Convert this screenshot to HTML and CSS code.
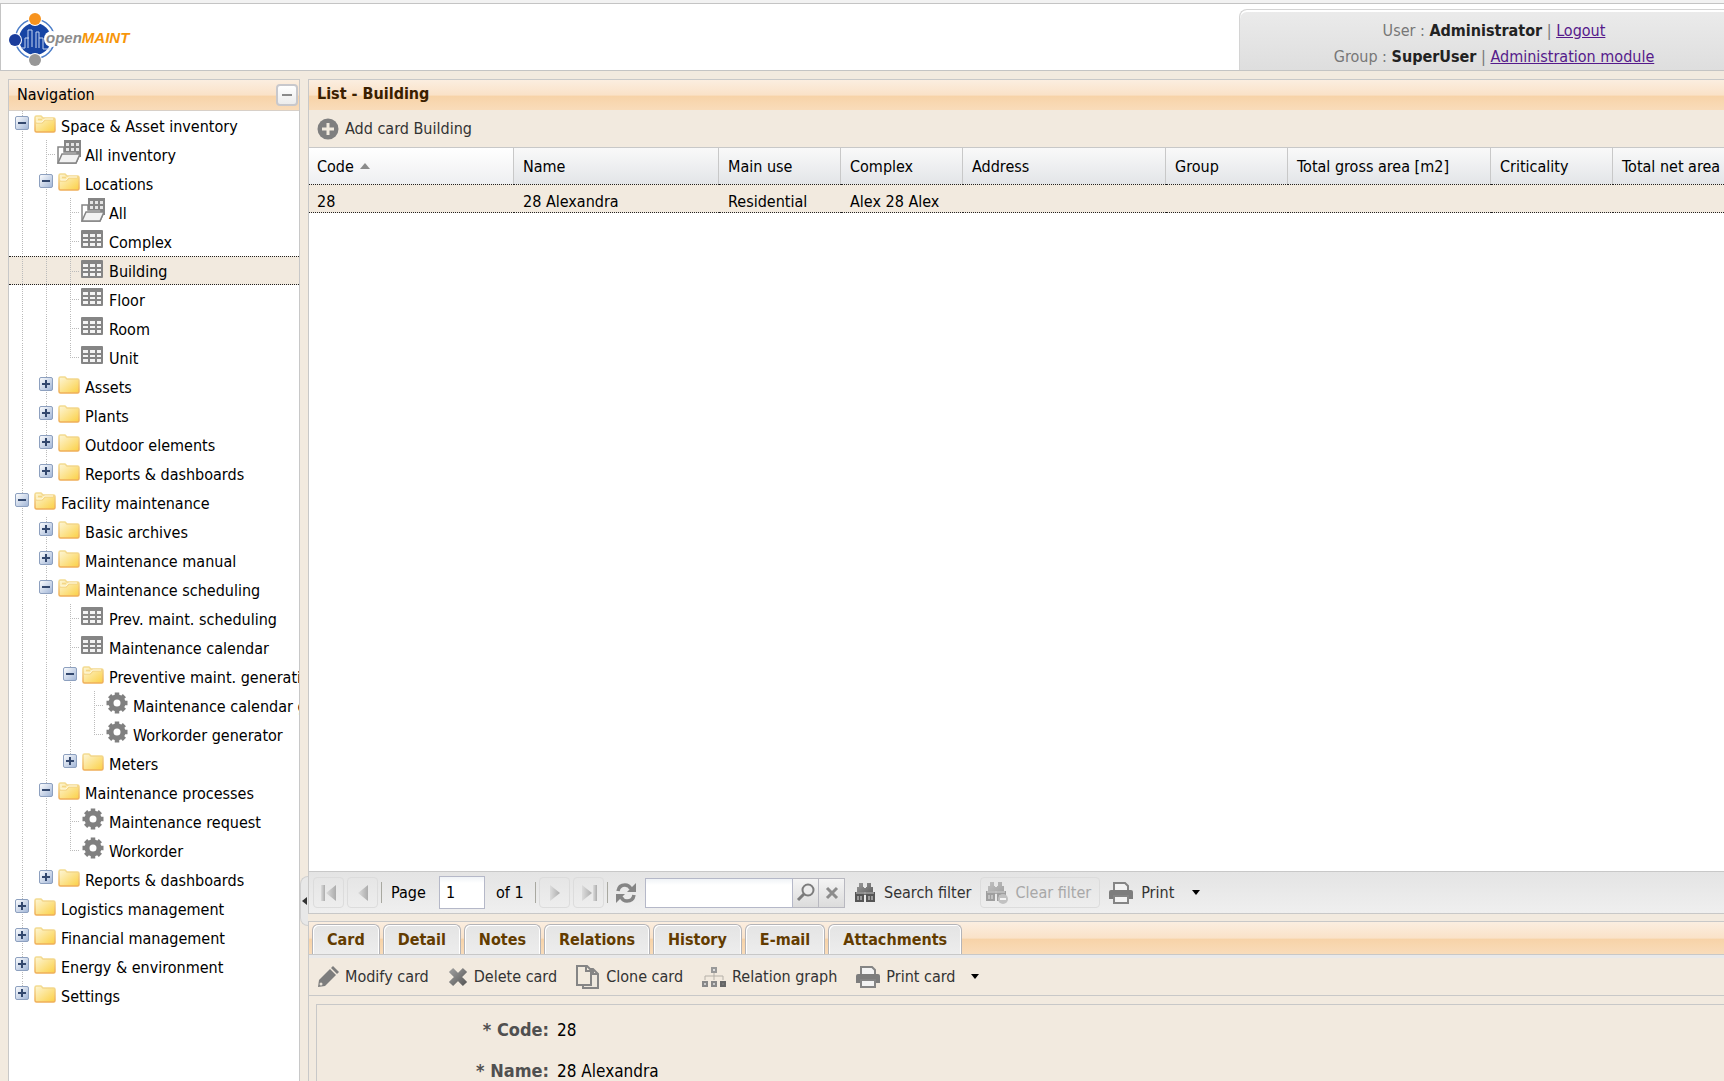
FILE: index.html
```html
<!DOCTYPE html>
<html lang="en">

<head>
    <meta charset="UTF-8">
    <meta name="viewport" content="width=device-width, initial-scale=1.0">
    <title>openMAINT</title>
    <link rel="stylesheet" href="styles.css">
</head>

<body>
    <!-- Icon set -->
    <svg class="icon-set" aria-hidden="true">
        <defs>
            <linearGradient id="gold" x1="0" y1="0" x2="1" y2="1">
                <stop offset="0" stop-color="#fdf6d8"/>
                <stop offset="1" stop-color="#fbd044"/>
            </linearGradient>
            <linearGradient id="goldEdge" x1="0" y1="0" x2="0" y2="1">
                <stop offset="0" stop-color="#f3dc92"/>
                <stop offset="1" stop-color="#efae58"/>
            </linearGradient>
            <linearGradient id="blueBox" x1="0" y1="0" x2="1" y2="1">
                <stop offset="0" stop-color="#ffffff"/>
                <stop offset="1" stop-color="#9fb4d6"/>
            </linearGradient>
            <linearGradient id="fade" x1="0" y1="0" x2="1" y2="0">
                <stop offset="0" stop-color="#dcdcdc"/>
                <stop offset="1" stop-color="#acacac"/>
            </linearGradient>
            <linearGradient id="dark" x1="0" y1="0" x2="1" y2="1">
                <stop offset="0" stop-color="#9a9a9a"/>
                <stop offset="1" stop-color="#5c5c5c"/>
            </linearGradient>
            <symbol id="folder" viewBox="0 0 22 18">
                <path d="M1 2.5Q1 1 2.5 1H7L9 3H19.5Q21 3 21 4.5V15.5Q21 17 19.5 17H2.5Q1 17 1 15.5Z" fill="url(#gold)" stroke="url(#goldEdge)" stroke-width="1.5"/>
            </symbol>
            <symbol id="folder-open" viewBox="0 0 22 18">
                <path d="M1 2.5Q1 1 2.5 1H7L9 3H19.5Q21 3 21 4.5V15.5Q21 17 19.5 17H2.5Q1 17 1 15.5Z" fill="url(#gold)" stroke="url(#goldEdge)" stroke-width="1.5"/>
                <path d="M2 8H8L11 5H20M4 4.5H8" fill="none" stroke="#f4d687" stroke-width="1.5"/>
                <path d="M2.5 7H8L10.5 4H19" fill="none" stroke="#fffbe8"/>
            </symbol>
            <symbol id="minus" viewBox="0 0 14 14">
                <rect x=".5" y=".5" width="13" height="13" rx="1.5" fill="url(#blueBox)" stroke="#8da0bf"/>
                <path d="M3 7H11" stroke="#33486e" stroke-width="2"/>
            </symbol>
            <symbol id="plus" viewBox="0 0 14 14">
                <rect x=".5" y=".5" width="13" height="13" rx="1.5" fill="url(#blueBox)" stroke="#8da0bf"/>
                <path d="M3 7H11M7 3V11" stroke="#33486e" stroke-width="2"/>
            </symbol>
            <symbol id="grid" viewBox="0 0 22 18">
                <rect width="22" height="18" rx="1" fill="#858585"/>
                <path d="M2 4H7V7H2ZM9 4H14V7H9ZM16 4H20V7H16ZM2 9H7V11H2ZM9 9H14V11H9ZM16 9H20V11H16ZM2 13H7V16H2ZM9 13H14V16H9ZM16 13H20V16H16Z" fill="#fff" fill-opacity=".9"/>
            </symbol>
            <symbol id="grid-folder" viewBox="0 0 24 24">
                <rect x="7" y="0" width="17" height="17" fill="#858585"/>
                <path d="M9 3H12V6H9ZM14 3H17V6H14ZM19 3H22V6H19ZM9 8H12V11H9ZM14 8H17V11H14ZM19 8H22V11H19Z" fill="#e4e4e4"/>
                <path d="M1 23V7H7V12H20V15L23 14L19 23Z" fill="#fff" stroke="#858585" stroke-width="1.5"/>
                <path d="M1 23L5 14H23L19 23Z" fill="#f2f2f2" stroke="#858585" stroke-width="1.5"/>
            </symbol>
            <symbol id="gear" viewBox="0 0 22 22">
                <circle cx="11" cy="11" r="6" fill="none" stroke="#808080" stroke-width="5"/>
                <path d="M11 .5V4M11 18V21.5M.5 11H4M18 11H21.5M3.6 3.6L6 6M16 16L18.4 18.4M3.6 18.4L6 16M16 6L18.4 3.6" stroke="#808080" stroke-width="4.5"/>
            </symbol>
            <symbol id="add" viewBox="0 0 22 22">
                <circle cx="11" cy="11" r="10.5" fill="#7f7f7f"/>
                <path d="M5 11H17M11 5V17" stroke="#f1eade" stroke-width="3"/>
            </symbol>
            <symbol id="first" viewBox="0 0 18 20">
                <path d="M1 2H5V18H1Z" fill="url(#fade)"/>
                <path d="M16 2V18L6 10Z" fill="url(#fade)"/>
            </symbol>
            <symbol id="prev" viewBox="0 0 18 20">
                <path d="M14 2V18L4 10Z" fill="url(#fade)"/>
            </symbol>
            <symbol id="next" viewBox="0 0 18 20">
                <path d="M4 2V18L14 10Z" fill="url(#fade)"/>
            </symbol>
            <symbol id="last" viewBox="0 0 18 20">
                <path d="M2 2V18L12 10Z" fill="url(#fade)"/>
                <path d="M13 2H17V18H13Z" fill="url(#fade)"/>
            </symbol>
            <symbol id="refresh" viewBox="0 0 22 22">
                <path d="M3 9Q4 3 10 3Q14 3 16 7" fill="none" stroke="#858585" stroke-width="3.5"/>
                <path d="M21 1V10H12Z" fill="#858585"/>
                <path d="M19 13Q18 19 12 19Q8 19 6 15" fill="none" stroke="#858585" stroke-width="3.5"/>
                <path d="M1 21V12H10Z" fill="#858585"/>
            </symbol>
            <symbol id="lens" viewBox="0 0 20 20">
                <circle cx="12" cy="7" r="5.5" fill="#ececec" stroke="#7c7c7c" stroke-width="2"/>
                <path d="M8 11L2 17" stroke="#7c7c7c" stroke-width="3"/>
            </symbol>
            <symbol id="cross" viewBox="0 0 20 20">
                <path d="M5 5L15 15M15 5L5 15" stroke="#8c8c8c" stroke-width="3"/>
            </symbol>
            <symbol id="binoculars" viewBox="0 0 22 20">
                <path d="M5 0H9V4H5ZM13 0H17V4H13ZM3 4H10V10H3ZM12 4H19V10H12ZM10 5H12V12H10Z" fill="url(#dark)"/>
                <path d="M1 9H10V19H1ZM12 9H21V19H12Z" fill="#555"/>
                <path d="M3 13H5V17H3ZM6 13H8V17H6ZM14 13H16V17H14ZM17 13H19V17H17Z" fill="#9a9a9a"/>
                <path d="M2 10H20" stroke="#c8c8c8"/>
            </symbol>
            <symbol id="binoculars-off" viewBox="0 0 24 22">
                <use href="#binoculars" width="22" height="20"/>
                <circle cx="18" cy="17" r="5" fill="#999"/>
                <path d="M15 17H21" stroke="#fff" stroke-width="2"/>
            </symbol>
            <symbol id="printer" viewBox="0 0 24 22">
                <path d="M5 9V1H16L19 4V9" fill="#f3f3f3" stroke="#858585" stroke-width="2"/>
                <path d="M0 10Q0 8 2 8H22Q24 8 24 10V17H0Z" fill="#7d7d7d"/>
                <path d="M5 14H19V21H5Z" fill="#f3f3f3" stroke="#858585" stroke-width="2"/>
            </symbol>
            <symbol id="pencil" viewBox="0 0 22 22">
                <path d="M1 21L2 14L13 3L19 9L8 20Z" fill="#7d7d7d"/>
                <path d="M14 2L16 0L22 6L20 8Z" fill="#7d7d7d"/>
                <circle cx="4" cy="18" r="1.5" fill="#e8e2d8"/>
            </symbol>
            <symbol id="delete" viewBox="0 0 20 20">
                <path d="M3 3L17 17M17 3L3 17" stroke="url(#dark)" stroke-width="6"/>
            </symbol>
            <symbol id="clone" viewBox="0 0 24 24">
                <path d="M7 4H17L22 9V23H7Z" fill="#eee8de" stroke="#858585" stroke-width="2"/>
                <path d="M1 1H11L15 5V20H1Z" fill="#f1eade" stroke="#858585" stroke-width="2"/>
                <path d="M10 1V6H15M17 4V9H22" fill="none" stroke="#858585" stroke-width="2"/>
            </symbol>
            <symbol id="graph" viewBox="0 0 24 20">
                <path d="M3 13V9H21V13M12 5V13" fill="none" stroke="#b5b0a8"/>
                <path d="M10 1H14V5H10Z" fill="#ddd" stroke="#999" stroke-width="2"/>
                <path d="M1 15H5V19H1ZM10 15H14V19H10Z" fill="#ccc" stroke="#888" stroke-width="2"/>
                <path d="M19 15H23V19H19Z" fill="#777" stroke="#666" stroke-width="2"/>
            </symbol>
        </defs>
    </svg>

    <header class="header">
        <svg class="logo" width="126" height="54" viewBox="0 0 126 54" role="img" aria-label="openMAINT">
            <circle cx="27" cy="27" r="19.5" fill="none" stroke="#4a7cc8" stroke-width="1.5"/>
            <circle cx="27" cy="27" r="16" fill="#1644a4"/>
            <path d="M13 36H17V26H21M20 36V18H24V35M28 36V20H31V36M31 26H35V37H43" fill="none" stroke="#c4d4f0"/>
            <circle cx="44" cy="27" r="8" fill="#fff"/>
            <circle cx="27" cy="7" r="7" fill="#fff"/>
            <circle cx="27" cy="7" r="6" fill="#f7931e"/>
            <circle cx="7" cy="28" r="7" fill="#fff"/>
            <circle cx="7" cy="28" r="6" fill="#1a3c9c"/>
            <circle cx="27" cy="48" r="7" fill="#fff"/>
            <circle cx="27" cy="48" r="6" fill="#979797"/>
            <text class="logo-text" x="38" y="31" fill="#8c8c8c">open<tspan fill="#f7960a">MAINT</tspan></text>
        </svg>
        <div class="user-info">
            <p>User : <strong>Administrator</strong> | <a href="#logout">Logout</a></p>
            <p>Group : <strong>SuperUser</strong> | <a href="#admin">Administration module</a></p>
        </div>
    </header>

    <div class="viewport">
        <nav class="navigation">
            <div class="nav-title">
                <h2>Navigation</h2>
                <button class="collapse" type="button" aria-label="Collapse"></button>
            </div>
            <ul class="tree">
                <li><button class="elbow" type="button" aria-label="Collapse"><svg><use href="#minus"/></svg></button><svg class="folder"><use href="#folder-open"/></svg><a href="#">Space &amp; Asset inventory</a></li>
                <li><i class="line"></i><i class="branch"></i><svg class="grid-folder"><use href="#grid-folder"/></svg><a href="#">All inventory</a></li>
                <li><i class="line"></i><button class="elbow" type="button" aria-label="Collapse"><svg><use href="#minus"/></svg></button><svg class="folder"><use href="#folder-open"/></svg><a href="#">Locations</a></li>
                <li><i class="line"></i><i class="line"></i><i class="branch"></i><svg class="grid-folder"><use href="#grid-folder"/></svg><a href="#">All</a></li>
                <li><i class="line"></i><i class="line"></i><i class="branch"></i><svg class="grid-icon"><use href="#grid"/></svg><a href="#">Complex</a></li>
                <li class="selected"><i class="line"></i><i class="line"></i><i class="branch"></i><svg class="grid-icon"><use href="#grid"/></svg><a href="#">Building</a></li>
                <li><i class="line"></i><i class="line"></i><i class="branch"></i><svg class="grid-icon"><use href="#grid"/></svg><a href="#">Floor</a></li>
                <li><i class="line"></i><i class="line"></i><i class="branch"></i><svg class="grid-icon"><use href="#grid"/></svg><a href="#">Room</a></li>
                <li><i class="line"></i><i class="line"></i><i class="branch end"></i><svg class="grid-icon"><use href="#grid"/></svg><a href="#">Unit</a></li>
                <li><i class="line"></i><button class="elbow" type="button" aria-label="Expand"><svg><use href="#plus"/></svg></button><svg class="folder"><use href="#folder"/></svg><a href="#">Assets</a></li>
                <li><i class="line"></i><button class="elbow" type="button" aria-label="Expand"><svg><use href="#plus"/></svg></button><svg class="folder"><use href="#folder"/></svg><a href="#">Plants</a></li>
                <li><i class="line"></i><button class="elbow" type="button" aria-label="Expand"><svg><use href="#plus"/></svg></button><svg class="folder"><use href="#folder"/></svg><a href="#">Outdoor elements</a></li>
                <li><i class="line"></i><button class="elbow end" type="button" aria-label="Expand"><svg><use href="#plus"/></svg></button><svg class="folder"><use href="#folder"/></svg><a href="#">Reports &amp; dashboards</a></li>
                <li><button class="elbow" type="button" aria-label="Collapse"><svg><use href="#minus"/></svg></button><svg class="folder"><use href="#folder-open"/></svg><a href="#">Facility maintenance</a></li>
                <li><i class="line"></i><button class="elbow" type="button" aria-label="Expand"><svg><use href="#plus"/></svg></button><svg class="folder"><use href="#folder"/></svg><a href="#">Basic archives</a></li>
                <li><i class="line"></i><button class="elbow" type="button" aria-label="Expand"><svg><use href="#plus"/></svg></button><svg class="folder"><use href="#folder"/></svg><a href="#">Maintenance manual</a></li>
                <li><i class="line"></i><button class="elbow" type="button" aria-label="Collapse"><svg><use href="#minus"/></svg></button><svg class="folder"><use href="#folder-open"/></svg><a href="#">Maintenance scheduling</a></li>
                <li><i class="line"></i><i class="line"></i><i class="branch"></i><svg class="grid-icon"><use href="#grid"/></svg><a href="#">Prev. maint. scheduling</a></li>
                <li><i class="line"></i><i class="line"></i><i class="branch"></i><svg class="grid-icon"><use href="#grid"/></svg><a href="#">Maintenance calendar</a></li>
                <li><i class="line"></i><i class="line"></i><button class="elbow" type="button" aria-label="Collapse"><svg><use href="#minus"/></svg></button><svg class="folder"><use href="#folder-open"/></svg><a href="#">Preventive maint. generation</a></li>
                <li><i class="line"></i><i class="line"></i><i class="line"></i><i class="branch"></i><svg class="gear"><use href="#gear"/></svg><a href="#">Maintenance calendar generator</a></li>
                <li><i class="line"></i><i class="line"></i><i class="line"></i><i class="branch end"></i><svg class="gear"><use href="#gear"/></svg><a href="#">Workorder generator</a></li>
                <li><i class="line"></i><i class="line"></i><button class="elbow end" type="button" aria-label="Expand"><svg><use href="#plus"/></svg></button><svg class="folder"><use href="#folder"/></svg><a href="#">Meters</a></li>
                <li><i class="line"></i><button class="elbow" type="button" aria-label="Collapse"><svg><use href="#minus"/></svg></button><svg class="folder"><use href="#folder-open"/></svg><a href="#">Maintenance processes</a></li>
                <li><i class="line"></i><i class="line"></i><i class="branch"></i><svg class="gear"><use href="#gear"/></svg><a href="#">Maintenance request</a></li>
                <li><i class="line"></i><i class="line"></i><i class="branch end"></i><svg class="gear"><use href="#gear"/></svg><a href="#">Workorder</a></li>
                <li><i class="line"></i><button class="elbow end" type="button" aria-label="Expand"><svg><use href="#plus"/></svg></button><svg class="folder"><use href="#folder"/></svg><a href="#">Reports &amp; dashboards</a></li>
                <li><button class="elbow" type="button" aria-label="Expand"><svg><use href="#plus"/></svg></button><svg class="folder"><use href="#folder"/></svg><a href="#">Logistics management</a></li>
                <li><button class="elbow" type="button" aria-label="Expand"><svg><use href="#plus"/></svg></button><svg class="folder"><use href="#folder"/></svg><a href="#">Financial management</a></li>
                <li><button class="elbow" type="button" aria-label="Expand"><svg><use href="#plus"/></svg></button><svg class="folder"><use href="#folder"/></svg><a href="#">Energy &amp; environment</a></li>
                <li><button class="elbow end" type="button" aria-label="Expand"><svg><use href="#plus"/></svg></button><svg class="folder"><use href="#folder"/></svg><a href="#">Settings</a></li>
            </ul>
        </nav>

        <div class="splitter">
            <button class="split-handle" type="button" aria-label="Hide navigation"></button>
        </div>

        <main class="content">
            <section class="list-panel">
                <h1 class="panel-title">List - Building</h1>
                <div class="toolbar">
                    <button class="tool" type="button"><svg width="22" height="22"><use href="#add"/></svg>Add card Building</button>
                </div>
                <div class="grid-wrap">
                    <table class="grid">
                        <colgroup>
                            <col class="wide"><col class="wide"><col class="narrow"><col class="narrow"><col class="medium"><col class="narrow"><col class="medium"><col class="narrow"><col class="medium">
                        </colgroup>
                        <thead>
                            <tr>
                                <th class="sorted">Code</th>
                                <th>Name</th>
                                <th>Main use</th>
                                <th>Complex</th>
                                <th>Address</th>
                                <th>Group</th>
                                <th>Total gross area [m2]</th>
                                <th>Criticality</th>
                                <th>Total net area [m2]</th>
                            </tr>
                        </thead>
                        <tbody>
                            <tr>
                                <td>28</td>
                                <td>28 Alexandra</td>
                                <td>Residential</td>
                                <td>Alex 28 Alex</td>
                                <td></td>
                                <td></td>
                                <td></td>
                                <td></td>
                                <td></td>
                            </tr>
                        </tbody>
                    </table>
                </div>
                <div class="pager">
                    <button class="page-button" type="button" aria-label="First page" disabled><svg width="18" height="20"><use href="#first"/></svg></button>
                    <button class="page-button" type="button" aria-label="Previous page" disabled><svg width="18" height="20"><use href="#prev"/></svg></button>
                    <span class="separator"></span>
                    <label class="page-label" for="page">Page</label>
                    <input class="page-input" id="page" type="text" value="1">
                    <span class="page-total">of 1</span>
                    <span class="separator"></span>
                    <button class="page-button" type="button" aria-label="Next page" disabled><svg width="18" height="20"><use href="#next"/></svg></button>
                    <button class="page-button" type="button" aria-label="Last page" disabled><svg width="18" height="20"><use href="#last"/></svg></button>
                    <span class="separator"></span>
                    <button class="refresh" type="button" aria-label="Refresh"><svg width="22" height="22"><use href="#refresh"/></svg></button>
                    <div class="search">
                        <input type="text" aria-label="Search">
                        <button type="button" aria-label="Search"><svg width="20" height="20"><use href="#lens"/></svg></button>
                        <button type="button" aria-label="Clear"><svg width="20" height="20"><use href="#cross"/></svg></button>
                    </div>
                    <button class="tool" type="button"><svg width="22" height="20"><use href="#binoculars"/></svg>Search filter</button>
                    <button class="tool boxed" type="button" disabled><svg width="24" height="22"><use href="#binoculars-off"/></svg>Clear filter</button>
                    <button class="tool menu" type="button"><svg width="24" height="22"><use href="#printer"/></svg>Print</button>
                </div>
            </section>

            <section class="card-panel">
                <div class="tabs" role="tablist">
                    <button type="button" role="tab">Card</button>
                    <button type="button" role="tab">Detail</button>
                    <button type="button" role="tab">Notes</button>
                    <button type="button" role="tab">Relations</button>
                    <button type="button" role="tab">History</button>
                    <button type="button" role="tab">E-mail</button>
                    <button type="button" role="tab">Attachments</button>
                </div>
                <div class="toolbar card-toolbar">
                    <button class="tool" type="button"><svg width="22" height="22"><use href="#pencil"/></svg>Modify card</button>
                    <button class="tool" type="button"><svg width="20" height="20"><use href="#delete"/></svg>Delete card</button>
                    <button class="tool" type="button"><svg width="24" height="24"><use href="#clone"/></svg>Clone card</button>
                    <button class="tool" type="button"><svg width="24" height="20"><use href="#graph"/></svg>Relation graph</button>
                    <button class="tool menu" type="button"><svg width="24" height="22"><use href="#printer"/></svg>Print card</button>
                </div>
                <dl class="card">
                    <dt>* Code:</dt>
                    <dd>28</dd>
                    <dt>* Name:</dt>
                    <dd>28 Alexandra</dd>
                </dl>
            </section>
        </main>
    </div>
</body>

</html>
```
FILE: styles.css
```css
* {
    box-sizing: border-box;
}

body {
    font-family: "DejaVu Sans Condensed", Tahoma, "Noto Sans", sans-serif;
    font-size: 16px;
    line-height: 20px;
    color: #000;
    background-color: #f2eadf;
    margin: 0;
    height: 100vh;
    display: flex;
    flex-direction: column;
    overflow: hidden;
}

h1, h2, p, ul, dl, dd {
    margin: 0;
    padding: 0;
}

button, input {
    font: inherit;
    color: inherit;
    margin: 0;
    padding: 0;
}

button {
    background: none;
    border: none;
    cursor: pointer;
}

svg {
    flex: none;
}

.icon-set {
    position: absolute;
    width: 0;
    height: 0;
}

/* Header */
.header {
    flex: none;
    display: flex;
    justify-content: space-between;
    height: 71px;
    background-color: #fff;
    border: 1px solid #c8c8c8;
    border-top: 4px solid #c4c4c4;
    border-right: none;
    border-image: linear-gradient(#f2f2f2 0 3px, #c4c4c4 3px) 4 0 1 1;
}

.logo {
    margin: 8px 0 0 7px;
}

.logo-text {
    font-family: "Liberation Sans Narrow", "Liberation Sans", Arial, sans-serif;
    font-size: 15px;
    font-weight: bold;
    font-style: italic;
}

.user-info {
    width: 485px;
    margin-top: 5px;
    padding: 8px 0 0 24px;
    text-align: center;
    line-height: 26px;
    color: #777;
    background: linear-gradient(#ebebeb, #dedede);
    border: 1px solid #d4d4d4;
    border-width: 1px 0 0 1px;
    border-top-left-radius: 8px;
    box-shadow: inset 0 2px #fff;
}

.user-info strong {
    color: #222;
}

.user-info a {
    color: #551a8b;
}

/* Panels */
.viewport {
    flex: 1;
    display: flex;
    min-height: 0;
    padding: 8px 0 0 8px;
}

.navigation {
    flex: none;
    width: 292px;
    background-color: #fff;
    border: 1px solid #c8c8c8;
    border-bottom: none;
    overflow: hidden;
}

.nav-title,
.panel-title,
.tabs {
    background: linear-gradient(#fbeee0, #fae2c8 50%, #f7d3a8 54%, #f9dcba);
}

.nav-title {
    display: flex;
    align-items: center;
    justify-content: space-between;
    height: 31px;
    padding: 0 1px 0 8px;
    border-bottom: 1px solid #d8d0c8;
}

.nav-title h2 {
    font-size: 16px;
    font-weight: normal;
}

.collapse {
    display: grid;
    place-items: center;
    width: 22px;
    height: 22px;
    background: linear-gradient(#fff, #ececec);
    border: 2px solid #c8c8cc;
    border-radius: 4px;
}

.collapse::before {
    content: "";
    width: 10px;
    height: 2px;
    background-color: #8a8a8a;
}

/* Navigation tree */
.tree {
    list-style: none;
}

.tree li {
    display: flex;
    align-items: flex-start;
    height: 29px;
    padding-left: 1px;
    white-space: nowrap;
}

.tree li.selected {
    background-color: #f2eadf;
    border-top: 1px dotted #222;
    border-bottom: 1px dotted #222;
}

.tree .line,
.tree .branch,
.tree .elbow {
    flex: none;
    width: 24px;
    height: 27px;
    background: repeating-linear-gradient(#bbb 0 1px, transparent 1px 2px) 12px 0 / 1px 100% no-repeat;
}

.tree .branch {
    background:
        repeating-linear-gradient(#bbb 0 1px, transparent 1px 2px) 12px 0 / 1px 100% no-repeat,
        repeating-linear-gradient(90deg, #bbb 0 1px, transparent 1px 2px) 12px 14px / 10px 1px no-repeat;
}

.tree .elbow {
    display: flex;
    align-items: flex-start;
    padding: 5px 0 0 5px;
}

.tree .end {
    height: 15px;
}

.tree svg {
    width: 22px;
    height: 18px;
    margin: 4px 5px 0 0;
}

.tree .elbow svg {
    width: 14px;
    height: 14px;
    margin: 0;
}

.tree .grid-icon {
    margin: 3px 6px 0 -1px;
}

.tree .grid-folder {
    width: 24px;
    height: 24px;
    margin: 0 4px 0 -1px;
}

.tree .gear {
    height: 22px;
    margin: 1px 5px 0 0;
}

.tree a {
    color: #000;
    text-decoration: none;
    line-height: 32px;
}

.tree .selected a {
    line-height: 30px;
}

.splitter {
    position: relative;
    flex: none;
    width: 8px;
}

.split-handle {
    position: absolute;
    left: 0;
    bottom: 155px;
    display: grid;
    place-items: center;
    width: 8px;
    height: 50px;
    background-color: #e8e8e8;
    border: 1px solid #d0d0d0;
    border-right: none;
    border-radius: 8px 0 0 8px;
}

.split-handle::before {
    content: "";
    border: 4px solid transparent;
    border-right: 5px solid #333;
    border-left: none;
}

.content {
    flex: 1;
    min-width: 0;
    display: flex;
    flex-direction: column;
    gap: 7px;
}

/* Card list */
.list-panel {
    flex: 1;
    min-height: 0;
    display: flex;
    flex-direction: column;
    border: 1px solid #c8c8c8;
    border-right: none;
}

.panel-title {
    height: 30px;
    padding-left: 8px;
    font-size: 16px;
    line-height: 28px;
    color: #3a2000;
}

.toolbar {
    display: flex;
    align-items: center;
    height: 37px;
    padding-left: 8px;
}

.tool {
    display: flex;
    align-items: center;
    gap: 6px;
    color: #333;
    white-space: nowrap;
}

.tool.menu::after {
    content: "";
    margin-left: 10px;
    border: 4px solid transparent;
    border-top: 5px solid #000;
    border-bottom: none;
}

.grid-wrap {
    flex: 1;
    min-height: 0;
    background-color: #fff;
    border-top: 1px solid #c8c8c8;
    overflow: hidden;
}

.grid {
    width: 1507px;
    table-layout: fixed;
    border-spacing: 0;
}

.wide {
    width: 205px;
}

.medium {
    width: 203px;
}

.narrow {
    width: 122px;
}

.grid th,
.grid td {
    padding: 2px 0 0 9px;
    font-weight: normal;
    text-align: left;
    white-space: nowrap;
}

.grid th:first-child,
.grid td:first-child {
    padding-left: 8px;
}

.grid th {
    height: 36px;
    background: linear-gradient(#f9f9f9, #e3e5e8);
    border-right: 1px solid #c8c8c8;
}

.grid th.sorted {
    background: linear-gradient(#fff, #eeeff1);
}

.sorted::after {
    content: "";
    display: inline-block;
    margin-left: 6px;
    vertical-align: 3px;
    border: 5px solid transparent;
    border-bottom: 6px solid #8c8c8c;
    border-top: none;
}

.grid td {
    height: 29px;
    padding-top: 7px;
    background-color: #f2eadf;
    border-top: 1px dotted #222;
    border-bottom: 1px dotted #222;
}

/* Paging bar */
.pager {
    flex: none;
    display: flex;
    align-items: center;
    height: 42px;
    padding-left: 4px;
    background: linear-gradient(#e4e4e4, #efefef);
    border-top: 1px solid #c8c8c8;
}

.pager .tool {
    gap: 8px;
}

.page-button {
    display: grid;
    place-items: center;
    width: 31px;
    height: 31px;
    margin-right: 3px;
    border: 1px solid #dcdcdc;
    border-radius: 4px;
}

.separator {
    width: 1px;
    height: 21px;
    background-color: #a8a8a0;
}

.page-label {
    width: 57px;
    padding-left: 9px;
}

.page-input {
    width: 46px;
    height: 33px;
    padding-left: 6px;
    background: linear-gradient(#f0f3f6, #fff 6px);
    border: 1px solid #b5b8c8;
}

.page-total {
    width: 50px;
    padding-left: 11px;
}

.page-total + .separator {
    margin-right: 3px;
}

.refresh {
    display: grid;
    margin: 0 8px 0 7px;
}

.search {
    display: flex;
    width: 200px;
    height: 30px;
    margin-right: 9px;
}

.search input {
    flex: 1;
    min-width: 0;
    background: linear-gradient(#f0f3f6, #fff 6px);
    border: 1px solid #b5b8c8;
}

.search button {
    display: grid;
    place-items: center;
    width: 26px;
    background: linear-gradient(#f4f4f4, #dcdcdc);
    border: 1px solid #b8b8c0;
    border-left: none;
}

.pager .boxed {
    height: 31px;
    margin: 0 9px;
    padding: 0 8px 0 4px;
    gap: 6px;
    border: 1px solid #dcdcdc;
    border-radius: 4px;
    color: #a8a8a8;
}

.boxed svg {
    opacity: .5;
}

/* Card detail */
.card-panel {
    flex: none;
    height: 160px;
    display: flex;
    flex-direction: column;
    border-top: 1px solid #c8c8c8;
    border-left: 1px solid #c8c8c8;
    overflow: hidden;
}

.tabs {
    flex: none;
    display: flex;
    align-items: flex-end;
    gap: 3px;
    height: 33px;
    padding-left: 3px;
    border-bottom: 1px solid #c8c8c8;
}

.tabs button {
    height: 30px;
    padding: 0 14px;
    font-weight: bold;
    color: #633c00;
    background: linear-gradient(#e4e4e4, #ededed);
    border: 1px solid #b4b4b8;
    border-bottom: none;
    border-radius: 6px 6px 0 0;
    box-shadow: inset 1px 1px #fff, inset -1px 0 #fff;
}

.card-toolbar {
    flex: none;
    gap: 19px;
    height: 41px;
    border-top: 3px solid #e9e9ea;
    border-bottom: 1px solid #c8c8c8;
}

.card {
    flex: none;
    display: grid;
    grid-template-columns: 232px 1fr;
    column-gap: 8px;
    row-gap: 21px;
    height: 200px;
    align-content: start;
    margin: 8px 0 0 7px;
    padding-top: 15px;
    font-size: 17px;
    border: 1px solid #c8c8c8;
    border-right: none;
}

.card dt {
    font-size: 18px;
    font-weight: bold;
    text-align: right;
    color: #505050;
}
```
